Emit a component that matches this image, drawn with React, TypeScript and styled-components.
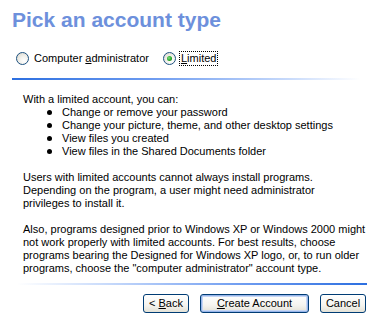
import React from "react";
import styled, { createGlobalStyle } from "styled-components";

const Global = createGlobalStyle`
  html, body { margin: 0; padding: 0; background: #ffffff; }
  body { font-family: Tahoma, "Liberation Sans", Arial, sans-serif; font-size: 11px; color: #000; }
`;

const Page = styled.div`
  width: 378px;
  height: 321px;
  box-sizing: border-box;
  padding: 8px 0 0 0;
  display: flex;
  flex-direction: column;
`;

const Title = styled.h1`
  margin: 0 0 0 12px;
  font-family: Arial, "Liberation Sans", sans-serif;
  font-weight: bold;
  font-size: 21px;
  line-height: 24px;
  color: #6d90dc;
`;

const RadioRow = styled.div`
  display: flex;
  align-items: center;
  gap: 12px;
  margin: 18px 0 0 16px;
  height: 16px;
`;

const RadioItem = styled.label`
  display: flex;
  align-items: center;
  gap: 3px;
  line-height: 13px;
`;

const RadioCircle = styled.span<{ $checked?: boolean }>`
  width: 11px;
  height: 11px;
  border-radius: 50%;
  border: 1px solid #1c5180;
  background: radial-gradient(circle at 65% 70%, #ffffff 0%, #f4f3ee 40%, #d6d3c8 100%);
  display: flex;
  align-items: center;
  justify-content: center;
  &::after {
    content: "";
    display: ${(p) => (p.$checked ? "block" : "none")};
    width: 5px;
    height: 5px;
    border-radius: 50%;
    background: radial-gradient(circle at 40% 40%, #7fe07f 0%, #21a121 60%, #16801a 100%);
  }
`;

const Label = styled.span<{ $focus?: boolean }>`
  padding: 0 1px;
  border: 1px ${(p) => (p.$focus ? "dotted #000" : "solid transparent")};
`;

const Acc = styled.span`
  text-decoration: underline;
`;

const TopRule = styled.div`
  margin: 12px 18px 0 12px;
  height: 2px;
  background: linear-gradient(to right, #2c6fe0 0%, #6d9bf0 40%, #c9dbfb 80%, #ffffff 100%);
`;

const Body = styled.div`
  margin: 13px 0 0 23px;
  line-height: 13px;
`;

const Para = styled.p<{ $last?: boolean }>`
  margin: 0 0 ${(p) => (p.$last ? 0 : 13)}px 0;
`;

const Intro = styled.p`
  margin: 0;
`;

const List = styled.ul`
  margin: 0 0 13px 0;
  padding: 0;
  list-style: none;
`;

const Item = styled.li`
  display: flex;
  align-items: center;
  padding-left: 24px;
  &::before {
    content: "";
    width: 5px;
    height: 5px;
    border-radius: 50%;
    background: #000;
    margin-right: 10px;
  }
`;

const BottomRule = styled.div`
  margin: 8px 11px 0 17px;
  height: 2px;
  background: linear-gradient(to right, #ffffff 0%, #c9dbfb 25%, #6d9bf0 65%, #2c6fe0 100%);
`;

const Buttons = styled.div`
  display: flex;
  justify-content: flex-end;
  gap: 11px;
  margin: 9px 12px 0 0;
`;

const Button = styled.button<{ $w: number; $default?: boolean }>`
  width: ${(p) => p.$w}px;
  height: 19px;
  box-sizing: border-box;
  border: 1px solid #003c74;
  border-radius: 3px;
  background: linear-gradient(to bottom, #ffffff 0%, #f5f4ef 60%, #e3e1d6 100%);
  font-family: inherit;
  font-size: 11px;
  color: #000;
  padding: 0;
  line-height: 15px;
  box-shadow: ${(p) =>
    p.$default ? "inset 0 0 0 1px #97b5ea, inset 0 0 0 2px #c6d6f3" : "none"};
`;

export default function App() {
  return (
    <>
      <Global />
      <Page>
        <Title>Pick an account type</Title>
        <RadioRow>
          <RadioItem>
            <RadioCircle />
            <Label>
              Computer <Acc>a</Acc>dministrator
            </Label>
          </RadioItem>
          <RadioItem>
            <RadioCircle $checked />
            <Label $focus>
              <Acc>L</Acc>imited
            </Label>
          </RadioItem>
        </RadioRow>
        <TopRule />
        <Body>
          <Intro>With a limited account, you can:</Intro>
          <List>
            <Item>Change or remove your password</Item>
            <Item>Change your picture, theme, and other desktop settings</Item>
            <Item>View files you created</Item>
            <Item>View files in the Shared Documents folder</Item>
          </List>
          <Para>
            Users with limited accounts cannot always install programs.
            <br />
            Depending on the program, a user might need administrator
            <br />
            privileges to install it.
          </Para>
          <Para $last>
            Also, programs designed prior to Windows XP or Windows 2000 might
            <br />
            not work properly with limited accounts. For best results, choose
            <br />
            programs bearing the Designed for Windows XP logo, or, to run older
            <br />
            programs, choose the "computer administrator" account type.
          </Para>
        </Body>
        <BottomRule />
        <Buttons>
          <Button $w={46}>
            &lt; <Acc>B</Acc>ack
          </Button>
          <Button $w={109} $default>
            <Acc>C</Acc>reate Account
          </Button>
          <Button $w={46}>Cancel</Button>
        </Buttons>
      </Page>
    </>
  );
}
